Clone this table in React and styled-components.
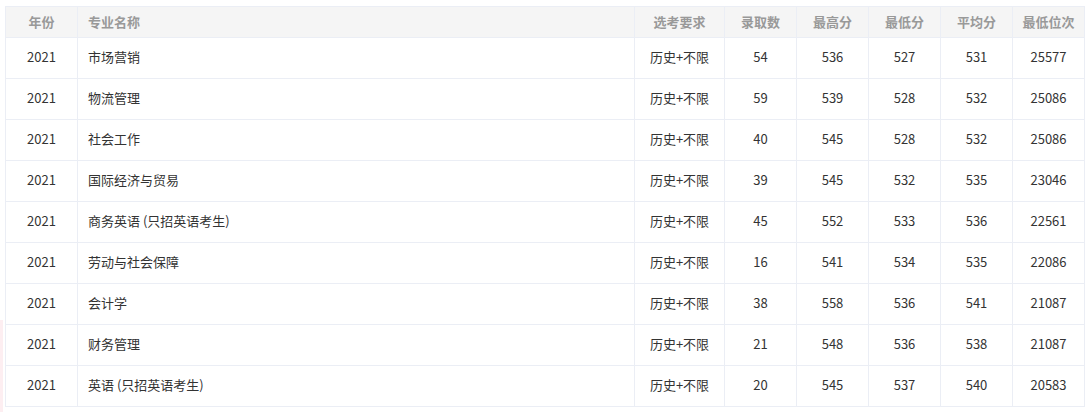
import React from "react";
import styled, { createGlobalStyle } from "styled-components";

const GlobalStyle = createGlobalStyle`
  body {
    margin: 0;
    background: #fff;
    font-family: "Noto Sans CJK SC", "Noto Sans", sans-serif;
  }
`;

const rows = [
  ["2021", "市场营销", "历史+不限", 54, 536, 527, 531, 25577],
  ["2021", "物流管理", "历史+不限", 59, 539, 528, 532, 25086],
  ["2021", "社会工作", "历史+不限", 40, 545, 528, 532, 25086],
  ["2021", "国际经济与贸易", "历史+不限", 39, 545, 532, 535, 23046],
  ["2021", "商务英语 (只招英语考生)", "历史+不限", 45, 552, 533, 536, 22561],
  ["2021", "劳动与社会保障", "历史+不限", 16, 541, 534, 535, 22086],
  ["2021", "会计学", "历史+不限", 38, 558, 536, 541, 21087],
  ["2021", "财务管理", "历史+不限", 21, 548, 536, 538, 21087],
  ["2021", "英语 (只招英语考生)", "历史+不限", 20, 545, 537, 540, 20583],
];

const headers = ["年份", "专业名称", "选考要求", "录取数", "最高分", "最低分", "平均分", "最低位次"];
const widths = [72, 557, 90, 72, 72, 72, 72, 72];

const App = () => {
  return (
    <Page>
      <GlobalStyle />
      <EdgeMark />
      <Table>
        <colgroup>
          {widths.map((w, i) => (
            <col key={i} style={{ width: w }} />
          ))}
        </colgroup>
        <thead>
          <tr>
            {headers.map((h, i) => (
              <HeadCell key={h} $left={i === 1}>
                {h}
              </HeadCell>
            ))}
          </tr>
        </thead>
        <tbody>
          {rows.map((r, ri) => (
            <tr key={ri}>
              {r.map((v, i) => (
                <Cell key={i} $left={i === 1}>
                  {v}
                </Cell>
              ))}
            </tr>
          ))}
        </tbody>
      </Table>
    </Page>
  );
};

const Page = styled.div`
  position: relative;
  padding: 6px 0 0 5px;
  height: 412px;
  box-sizing: border-box;
`;

// faint pink strip at the far left edge
const EdgeMark = styled.div`
  position: absolute;
  left: 0;
  top: 320px;
  width: 3px;
  height: 92px;
  background: #fdeef1;
`;

const Table = styled.table`
  border-collapse: collapse;
  table-layout: fixed;
  width: 1080px;
  border: 1px solid #ebeef5;
  font-size: 13px;
`;

const HeadCell = styled.th`
  height: 29px;
  padding: 0 ${(p) => (p.$left ? "10px" : "0")} 1px;
  text-align: ${(p) => (p.$left ? "left" : "center")};
  background: #f5f5f5;
  color: #999;
  font-weight: bold;
  border: 1px solid #ebeef5;
`;

const Cell = styled.td`
  height: 37px;
  padding: 0 ${(p) => (p.$left ? "10px" : "0")} 3px;
  text-align: ${(p) => (p.$left ? "left" : "center")};
  color: #333;
  border: 1px solid #ebeef5;
`;

export default App;
